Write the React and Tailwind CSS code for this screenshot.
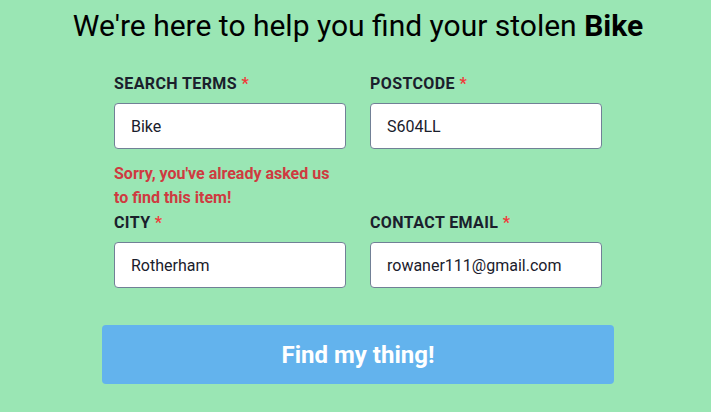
import React from "react";

function Field({ label, value }) {
  return (
    <div className="flex flex-col">
      <label className="text-[16px] leading-[24px] font-bold text-[#1a202c] tracking-[0.4px]">
        {label} <span className="text-[#f03a3a]">*</span>
      </label>
      <input
        readOnly
        value={value}
        className="mt-[7px] h-[46px] w-[232px] rounded-[4px] border border-[#718096] bg-white px-[16px] text-[16px] text-[#1a202c] outline-none"
        style={{ fontFamily: "Roboto, sans-serif" }}
      />
    </div>
  );
}

export default function App() {
  return (
    <div
      className="min-h-[412px] w-full bg-[#9ae6b4] pl-[5px]"
      style={{ fontFamily: "Roboto, 'Liberation Sans', sans-serif" }}
    >
      <div className="flex flex-col items-center">
        <h1 className="mt-[6px] text-[30px] leading-[40px] font-normal text-black">
          We're here to help you find your stolen <span className="font-bold">Bike</span>
        </h1>
        <div className="mt-[26px] flex w-[512px] flex-col">
          <div className="grid grid-cols-[232px_232px] gap-x-[24px] px-[12px]">
            <div className="flex flex-col">
              <Field label="SEARCH TERMS" value="Bike" />
              <p className="mt-[13px] text-[16px] leading-[24px] font-bold text-[#cf3a40]">
                Sorry, you've already asked us
                <br />
                to find this item!
              </p>
            </div>
            <div className="flex flex-col">
              <Field label="POSTCODE" value="S604LL" />
            </div>
            <div className="mt-[1px]">
              <Field label="CITY" value="Rotherham" />
            </div>
            <div className="mt-[1px]">
              <Field label="CONTACT EMAIL" value="rowaner111@gmail.com" />
            </div>
          </div>
          <button className="mt-[37px] h-[59px] w-[512px] rounded-[4px] bg-[#63b3ed] text-[24px] font-bold text-white">
            Find my thing!
          </button>
        </div>
      </div>
    </div>
  );
}
